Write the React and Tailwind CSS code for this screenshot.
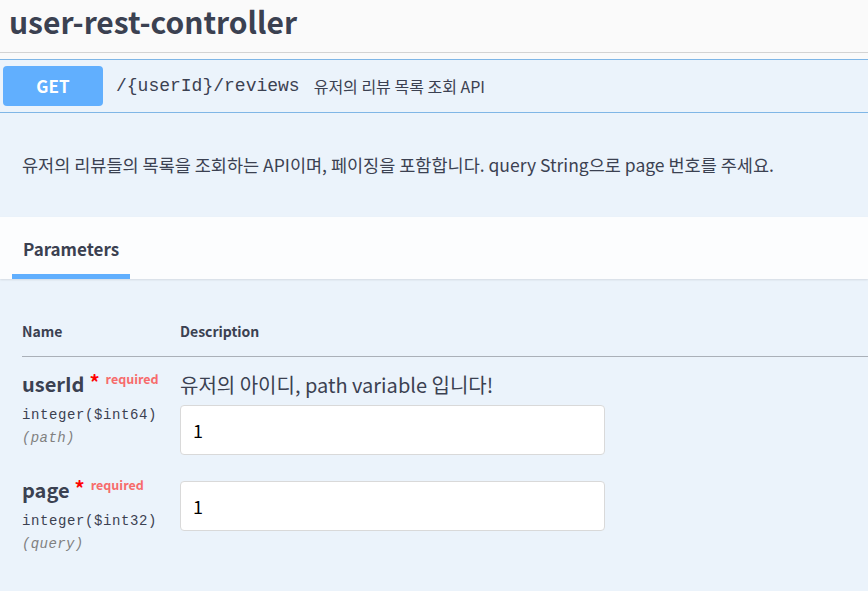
const sans = "font-['Noto_Sans_CJK_KR','Noto_Sans',sans-serif]";
const mono = "font-['Liberation_Mono','DejaVu_Sans_Mono',monospace]";

function ParamRow({ name, type, location, description, value }) {
  return (
    <div className={`flex pb-[12px] ${description ? "pt-[14px]" : "pt-[10px]"}`}>
      <div className="w-[158px] shrink-0">
        <div className="flex items-start">
          <span className="text-[20px] font-bold leading-[26px] text-[#3b4151]">{name}</span>
          <span className="ml-[5px] text-[20px] font-bold leading-[20px] text-[#ff0000] mt-[1px]">*</span>
          <span className="ml-[6px] text-[12.5px] font-semibold leading-[14px] text-[#f76b6b] mt-[1px]">
            required
          </span>
        </div>
        <div className={`${mono} mt-[8px] text-[14px] leading-[20px] tracking-[0.6px] text-[#3b4151]`}>
          {type}
        </div>
        <div className={`${mono} mt-[4px] text-[14px] italic leading-[18px] tracking-[0.4px] text-[#808080]`}>
          ({location})
        </div>
      </div>
      <div className={`flex-1 ${description ? "" : "pt-[4px]"}`}>
        {description && (
          <p className="mb-[6px] text-[20px] leading-[28px] text-[#3b4151]">{description}</p>
        )}
        <input
          readOnly
          value={value}
          className="h-[50px] w-[425px] rounded-[4px] border border-[#d9d9d9] bg-white px-[12px] text-[18px] text-black outline-none"
        />
      </div>
    </div>
  );
}

export default function App() {
  return (
    <div className={`${sans} min-h-[591px] w-[868px] overflow-hidden bg-[#fafafa]`}>
      {/* tag header */}
      <div className="h-[53px] border-b border-[#d3d3d3] pl-[9px]">
        <h1 className="pt-[1px] text-[30px] font-bold leading-[40px] text-[#3b4151]">user-rest-controller</h1>
      </div>

      {/* operation block */}
      <div className="mt-[6px] border-y border-[#7fb6e6] bg-[#ebf3fb]">
        <div className="flex h-[53px] items-center border-b border-[#7fb6e6] pl-[3px]">
          <div className="flex h-[40px] w-[100px] items-center justify-center rounded-[4px] bg-[#61affe] text-[17px] font-bold text-white">
            GET
          </div>
          <span className={`${mono} ml-[13px] text-[18px] text-[#3b4151]`}>/{"{userId}"}/reviews</span>
          <span className="ml-[14px] text-[16px] text-[#3b4151]">유저의 리뷰 목록 조회 API</span>
        </div>

        <div className="flex h-[104px] items-center px-[22px]">
          <p className="text-[17.5px] text-[#3b4151]">
            유저의 리뷰들의 목록을 조회하는 API이며, 페이징을 포함합니다. query String으로 page 번호를 주세요.
          </p>
        </div>

        <div className="flex h-[62px] items-end bg-[#fcfdfe] pl-[12px] shadow-[0_1px_2px_rgba(0,0,0,0.1)]">
          <div className="border-b-[5px] border-[#61affe] px-[11px] pb-[13px]">
            <span className="text-[17px] font-bold text-[#3b4151]">Parameters</span>
          </div>
        </div>

        <div className="pb-[40px] pl-[22px] pt-[42px]">
          <div className="flex border-b border-[#aab0b8] pb-[14px]">
            <div className="w-[158px] text-[14px] font-bold text-[#3b4151]">Name</div>
            <div className="text-[14px] font-bold text-[#3b4151]">Description</div>
          </div>
          <ParamRow
            name="userId"
            type="integer($int64)"
            location="path"
            description="유저의 아이디, path variable 입니다!"
            value="1"
          />
          <ParamRow name="page" type="integer($int32)" location="query" value="1" />
        </div>
      </div>
    </div>
  );
}
